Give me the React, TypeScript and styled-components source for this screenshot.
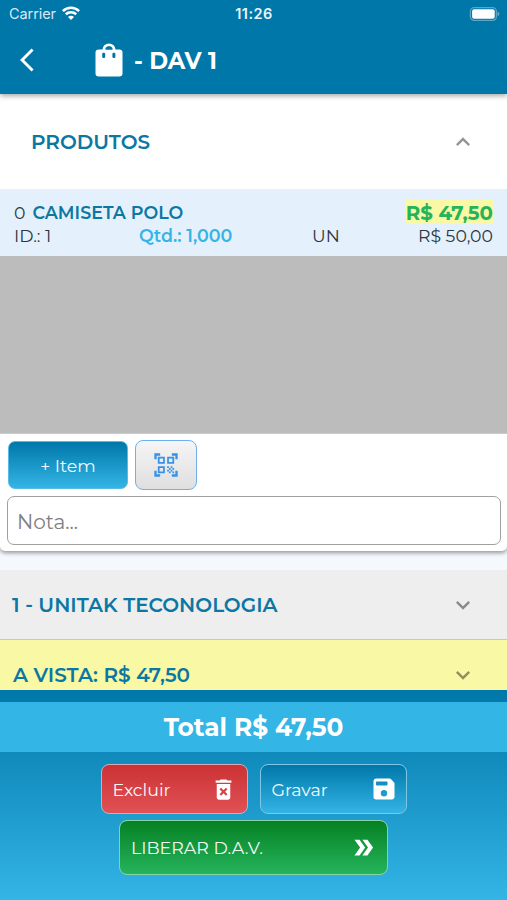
import React from "react";
import styled, { createGlobalStyle } from "styled-components";
import {
  MdArrowBackIos,
  MdDeleteForever,
  MdDoubleArrow,
  MdExpandLess,
  MdExpandMore,
  MdQrCodeScanner,
} from "react-icons/md";

const GlobalStyle = createGlobalStyle`
  * { box-sizing: border-box; }
  body {
    margin: 0;
    font-family: Montserrat, Inter, "Liberation Sans", sans-serif;
    background: #f5f9fe;
    color: #2d363f;
  }
  button { font-family: inherit; }
`;

const Screen = styled.div`
  display: flex;
  flex-direction: column;
  width: 507px;
  height: 900px;
  overflow: hidden;
`;

const Header = styled.header`
  position: relative;
  z-index: 1;
  flex: none;
  height: 94px;
  background: #0077a9;
  color: #fff;
  box-shadow: 0 2px 5px rgba(0, 0, 0, 0.35);
`;

const StatusBar = styled.div`
  display: grid;
  grid-template-columns: 1fr auto 1fr;
  align-items: center;
  height: 28px;
  padding: 0 7px 0 9px;
  font-family: Inter, sans-serif;
  font-size: 14.5px;
  line-height: 28px;
`;

const Carrier = styled.div`
  display: flex;
  align-items: center;
  gap: 6px;
  letter-spacing: -0.08px;
  color: #d5eaf4;
  & > svg { margin-top: -2px; }
`;

const Clock = styled.div`
  margin-left: -1px;
  font-weight: 600;
  letter-spacing: 0.5px;
  color: #e8f5fa;
`;

const BatterySlot = styled.div`
  display: flex;
  justify-content: flex-end;
  margin-top: -1px;
`;

const NavBar = styled.nav`
  display: flex;
  align-items: center;
  height: 63px;
  padding-left: 20px;
`;

const BackButton = styled.button`
  display: flex;
  width: 75px;
  padding: 0;
  border: 0;
  background: none;
  color: #fff;
`;

const Title = styled.h1`
  margin: 2px 0 0 11px;
  font-size: 22.8px;
  font-weight: 700;
  line-height: 28px;
`;

const Products = styled.section`
  flex: none;
  height: 457px;
  background: #fff;
  border-radius: 0 0 5px 5px;
  box-shadow: 0 2px 4px rgba(0, 0, 0, 0.4);
`;

const PanelHeader = styled.div<{ $height: number; $left: number; $bg?: string }>`
  display: flex;
  flex: none;
  align-items: center;
  justify-content: space-between;
  height: ${(p) => p.$height}px;
  padding: 0 30px 0 ${(p) => p.$left}px;
  background: ${(p) => p.$bg ?? "transparent"};
  color: rgba(0, 0, 0, 0.42);
`;

const PanelTitle = styled.h2`
  margin: 0;
  font-size: 20px;
  font-weight: 600;
  line-height: 24px;
  color: #0b77a3;
`;

const ProductRow = styled.div`
  display: flex;
  flex-direction: column;
  height: 67px;
  padding: 12px 14px 0 14px;
  background: #e4f1fc;
  font-size: 17.3px;
  line-height: 23px;
`;

const ProductLine = styled.div`
  display: flex;
  justify-content: space-between;
  height: 23px;
`;

const ProductDetails = styled.div`
  display: grid;
  grid-template-columns: 125px 173px 1fr auto;
  height: 23px;
`;

const ProductName = styled.span`
  margin-left: 7px;
  font-size: 17.5px;
  font-weight: 600;
  color: #0b77a3;
`;

const FinalPrice = styled.strong`
  height: 24px;
  margin-top: -1px;
  background: #f9f9a5;
  font-size: 19.8px;
  font-weight: 700;
  line-height: 26px;
  color: #27b35b;
`;

const Quantity = styled.strong`
  font-size: 17.5px;
  font-weight: 600;
  color: #38b3e6;
`;

const EmptyArea = styled.div`
  height: 178px;
  background: #bcbcbc;
  border-bottom: 1px solid #ccc;
`;

const Actions = styled.div`
  display: flex;
  gap: 7px;
  padding: 6px 8px;
`;

const AddItemButton = styled.button`
  width: 120px;
  height: 48px;
  margin-top: 1px;
  padding: 0;
  border: 1px solid #58bce2;
  border-radius: 7px;
  background: linear-gradient(#0077a9, #33b5e5);
  color: #f0faff;
  font-size: 17.4px;
`;

const ScanButton = styled.button`
  display: flex;
  align-items: center;
  justify-content: center;
  width: 62px;
  height: 50px;
  padding: 0 0 1px;
  border: 1.8px solid #6eb0ef;
  border-radius: 8px;
  background: linear-gradient(#f5f5f5, #dfdfdf);
  color: #3991e6;
`;

const NoteInput = styled.input`
  display: block;
  width: 494px;
  height: 49px;
  margin: 0 0 0 7px;
  padding: 3px 9px 0;
  border: 1px solid #a0a0a0;
  border-radius: 7px;
  outline: 0;
  background: #fff;
  font: 400 20px Montserrat, Inter, sans-serif;
  &::placeholder { color: #808080; }
`;

const Accordion = styled.section`
  display: flex;
  flex-direction: column;
  flex: none;
  height: 120px;
  margin-top: 19px;
  overflow: hidden;
  & > :first-child { border-bottom: 1px solid #c6c6c6; }
`;

const Footer = styled.footer`
  flex: none;
  height: 210px;
  padding-top: 12px;
  background: linear-gradient(#0077a9, #33b5e5);
`;

const TotalBar = styled.div`
  height: 50px;
  background: #33b5e5;
  color: #fff;
  font-size: 24.8px;
  font-weight: 700;
  line-height: 51px;
  text-align: center;
`;

const FooterActions = styled.div`
  display: flex;
  flex-wrap: wrap;
  justify-content: center;
  gap: 6px 12px;
  padding-top: 12px;
`;

type Tone = "danger" | "primary" | "success";
const tones: Record<Tone, { fill: string; border: string }> = {
  danger: { fill: "linear-gradient(#cb3235, #e05255)", border: "#dba7b2" },
  primary: { fill: "linear-gradient(#0077a9, #33b5e5)", border: "#80c7e5" },
  success: { fill: "linear-gradient(#068023, #25b45c)", border: "#86d3a6" },
};

const FooterButton = styled.button<{ $tone: Tone; $wide?: boolean }>`
  display: flex;
  align-items: center;
  justify-content: space-between;
  width: ${(p) => (p.$wide ? 269 : 147)}px;
  height: ${(p) => (p.$wide ? 55 : 50)}px;
  padding: 0 10px 0 11px;
  border: 1.5px solid ${(p) => tones[p.$tone].border};
  border-radius: 8px;
  background: ${(p) => tones[p.$tone].fill} padding-box;
  color: #fff;
  font-size: 17.4px;
  & > span { opacity: 0.95; }
`;

const WifiIcon = () => (
  <svg width="18" height="14" viewBox="0 0 18 14" fill="none" stroke="#fff" strokeWidth="2.6">
    <path d="M0.9 5.1C5.5.6 12.5.6 17.1 5.1" />
    <path d="M3.8 8.3c2.9-2.7 7.5-2.7 10.4 0" />
    <path d="M6 11c1.6-1.6 4.4-1.6 6 0L9 13.9Z" fill="#fff" stroke="none" />
  </svg>
);

const BatteryIcon = () => (
  <svg width="31" height="14" viewBox="0 0 31 14">
    <rect x="1.4" y="0.7" width="26" height="12.6" rx="3.8" fill="none" stroke="#5ba6c6" strokeWidth="1.3" />
    <rect x="3.1" y="2.3" width="22.6" height="9.4" rx="2" fill="#fff" />
    <path d="M28.7 4.8c2 .7 2 3.7 0 4.4Z" fill="#70b2ce" />
  </svg>
);

const BagIcon = () => (
  <svg width="28" height="34" viewBox="0 0 28 34">
    <path d="M8.8 8V7a5.2 5.2 0 0 1 10.4 0v1" fill="none" stroke="#fff" strokeWidth="2.8" />
    <rect x="0.5" y="6.5" width="27" height="27" rx="3.2" fill="#fff" />
    <path d="M11 6.6a3 3 0 0 1 6 0Z" fill="#0077a9" />
    <rect x="7.2" y="9.8" width="3" height="5.2" rx="1.2" fill="#0077a9" />
    <rect x="17.4" y="9.8" width="3" height="5.2" rx="1.2" fill="#0077a9" />
  </svg>
);

const SaveIcon = () => (
  <svg width="24" height="24" viewBox="0 0 24 24" fill="#fff">
    <path
      fillRule="evenodd"
      d="M4.2 1.5h13.3c.6 0 1 .2 1.4.6l3 3.1c.4.4.6.8.6 1.4v13.2c0 1.5-1.2 2.7-2.7 2.7H4.2a2.7 2.7 0 0 1-2.7-2.7V4.2c0-1.5 1.2-2.7 2.7-2.7ZM5 4.5c-.6 0-1 .4-1 1v2c0 .6.4 1 1 1h9.5c.6 0 1-.4 1-1v-2c0-.6-.4-1-1-1H5ZM12 13a3.2 3.2 0 1 0 0 6.4A3.2 3.2 0 0 0 12 13Z"
    />
  </svg>
);

export default function App() {
  return (
    <Screen>
      <GlobalStyle />
      <Header>
        <StatusBar>
          <Carrier>
            Carrier
            <WifiIcon />
          </Carrier>
          <Clock>11:26</Clock>
          <BatterySlot>
            <BatteryIcon />
          </BatterySlot>
        </StatusBar>
        <NavBar>
          <BackButton aria-label="Voltar">
            <MdArrowBackIos size={28} />
          </BackButton>
          <BagIcon />
          <Title>- DAV 1</Title>
        </NavBar>
      </Header>

      <Products>
        <PanelHeader $height={95} $left={31}>
          <PanelTitle>PRODUTOS</PanelTitle>
          <MdExpandLess size={28} />
        </PanelHeader>
        <ProductRow>
          <ProductLine>
            <span>
              0<ProductName>CAMISETA POLO</ProductName>
            </span>
            <FinalPrice>R$ 47,50</FinalPrice>
          </ProductLine>
          <ProductDetails>
            <span>ID.: 1</span>
            <Quantity>Qtd.: 1,000</Quantity>
            <span>UN</span>
            <span>R$ 50,00</span>
          </ProductDetails>
        </ProductRow>
        <EmptyArea />
        <Actions>
          <AddItemButton>+ Item</AddItemButton>
          <ScanButton aria-label="Ler QR code">
            <MdQrCodeScanner size={28} />
          </ScanButton>
        </Actions>
        <NoteInput placeholder="Nota..." />
      </Products>

      <Accordion>
        <PanelHeader $height={70} $left={12} $bg="#eeeeee">
          <PanelTitle>1 - UNITAK TECONOLOGIA</PanelTitle>
          <MdExpandMore size={28} />
        </PanelHeader>
        <PanelHeader $height={69} $left={13} $bg="#f9f8a4">
          <PanelTitle>A VISTA: R$ 47,50</PanelTitle>
          <MdExpandMore size={28} />
        </PanelHeader>
      </Accordion>

      <Footer>
        <TotalBar>Total R$ 47,50</TotalBar>
        <FooterActions>
          <FooterButton $tone="danger">
            <span>Excluir</span>
            <MdDeleteForever size={27} />
          </FooterButton>
          <FooterButton $tone="primary">
            <span>Gravar</span>
            <SaveIcon />
          </FooterButton>
          <FooterButton $tone="success" $wide>
            <span>LIBERAR D.A.V.</span>
            <MdDoubleArrow size={27} />
          </FooterButton>
        </FooterActions>
      </Footer>
    </Screen>
  );
}
